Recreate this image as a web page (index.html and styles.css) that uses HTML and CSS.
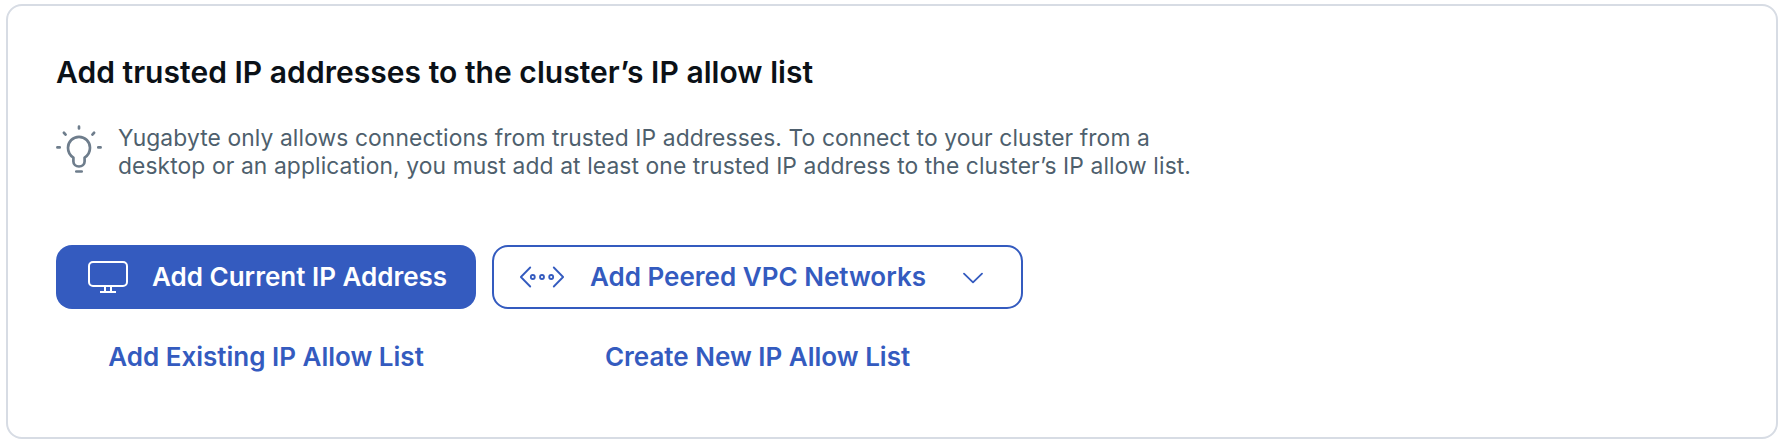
FILE: index.html
```html
<!DOCTYPE html>
<html lang="en">
<head>
<meta charset="utf-8">
<title>Add trusted IP addresses</title>
<link rel="stylesheet" href="styles.css">
</head>
<body>
<section class="card">
  <h1 class="title">Add trusted IP addresses to the cluster’s IP allow list</h1>
  <div class="hint">
    <svg class="bulb" width="48" height="50" viewBox="0 0 48 50" fill="none" stroke="#6e7d8c" stroke-width="2.7" stroke-linecap="round">
      <path d="M23 1.7V3.5M7.9 7.8L9.6 9.6M38.1 7.8L36.4 9.6M1.4 22.4H3.7M42.3 22.4H44.6M20.3 46.5H25.7"/>
      <path d="M17.4 36.5V32.6C13.6 30.2 12 26.6 12 22.8A11 11 0 0 1 34 22.8C34 26.6 32.4 30.2 28.6 32.6V36.5A5.6 5 0 0 1 17.4 36.5Z" stroke-linejoin="round"/>
    </svg>
    <p class="hint-text">Yugabyte only allows connections from trusted IP addresses. To connect to your cluster from a<br>desktop or an application, you must add at least one trusted IP address to the cluster’s IP allow list.</p>
  </div>
  <div class="actions">
    <button class="btn btn-primary">
      <svg width="40" height="32" viewBox="0 0 40 32" fill="none" stroke="#fff" stroke-width="2">
        <rect x="1" y="1" width="38" height="24" rx="4"/>
        <path d="M17 25V31M23 25V31M12 31H28"/>
      </svg>
      <span>Add Current IP Address</span>
    </button>
    <button class="btn btn-outline">
      <svg width="44" height="22" viewBox="0 0 44 22" fill="none" stroke="#345bbf" stroke-width="1.8" stroke-linecap="round" stroke-linejoin="round">
        <path d="M10.2 1.5L0.9 11L10.2 20.5M33.8 1.5L43.1 11L33.8 20.5"/>
        <circle cx="12.8" cy="11" r="2"/><circle cx="22" cy="11" r="2"/><circle cx="31.2" cy="11" r="2"/>
      </svg>
      <span>Add Peered VPC Networks</span>
      <svg class="chevron" width="20" height="12" viewBox="0 0 20 12" fill="none" stroke="#345bbf" stroke-width="1.8" stroke-linecap="round" stroke-linejoin="round">
        <path d="M1 1.6L10 10.4L19 1.6"/>
      </svg>
    </button>
    <a class="link">Add Existing IP Allow List</a>
    <a class="link">Create New IP Allow List</a>
  </div>
</section>
</body>
</html>
```
FILE: styles.css
```css
* { box-sizing: border-box; }
body {
  margin: 0;
  padding: 4px 6px 5px;
  height: 444px;
  background: #fff;
  font-family: Inter, "Liberation Sans", sans-serif;
}
.card {
  height: 435px;
  padding: 48px 48px 0;
  border: 2px solid #d7dce4;
  border-radius: 16px;
}
.title {
  margin: 0;
  font-size: 30px;
  font-weight: 600;
  line-height: 36px;
  letter-spacing: 0.04px;
  color: #0b1117;
  white-space: nowrap;
}
.hint {
  display: flex;
  height: 57px;
  margin-top: 34px;
  gap: 14px;
}
.bulb { margin-top: 1px; flex: none; }
.hint-text {
  margin: 0;
  font-size: 22.8px;
  line-height: 28px;
  letter-spacing: 0.11px;
  color: #4e5f6d;
  white-space: nowrap;
}
.actions {
  display: grid;
  grid-template-columns: 420px 531px;
  grid-template-rows: 64px 64px;
  gap: 16px;
  margin-top: 64px;
}
.btn {
  display: flex;
  align-items: center;
  margin: 0;
  border-radius: 16px;
  font: 600 26px/32px Inter, sans-serif;
  white-space: nowrap;
}
.btn svg { flex: none; }
.btn-primary {
  gap: 24px;
  padding: 0 0 0 32px;
  border: none;
  background: #345bbf;
  color: #fff;
}
.btn-outline {
  gap: 26px;
  padding: 0 38px 0 26px;
  border: 2px solid #345bbf;
  background: #fff;
  color: #345bbf;
}
.chevron {
  margin-left: auto;
  margin-top: 2px;
}
.link {
  display: flex;
  align-items: center;
  justify-content: center;
  font-size: 26px;
  font-weight: 600;
  line-height: 32px;
  padding-bottom: 1px;
  color: #345bbf;
  white-space: nowrap;
}
```
